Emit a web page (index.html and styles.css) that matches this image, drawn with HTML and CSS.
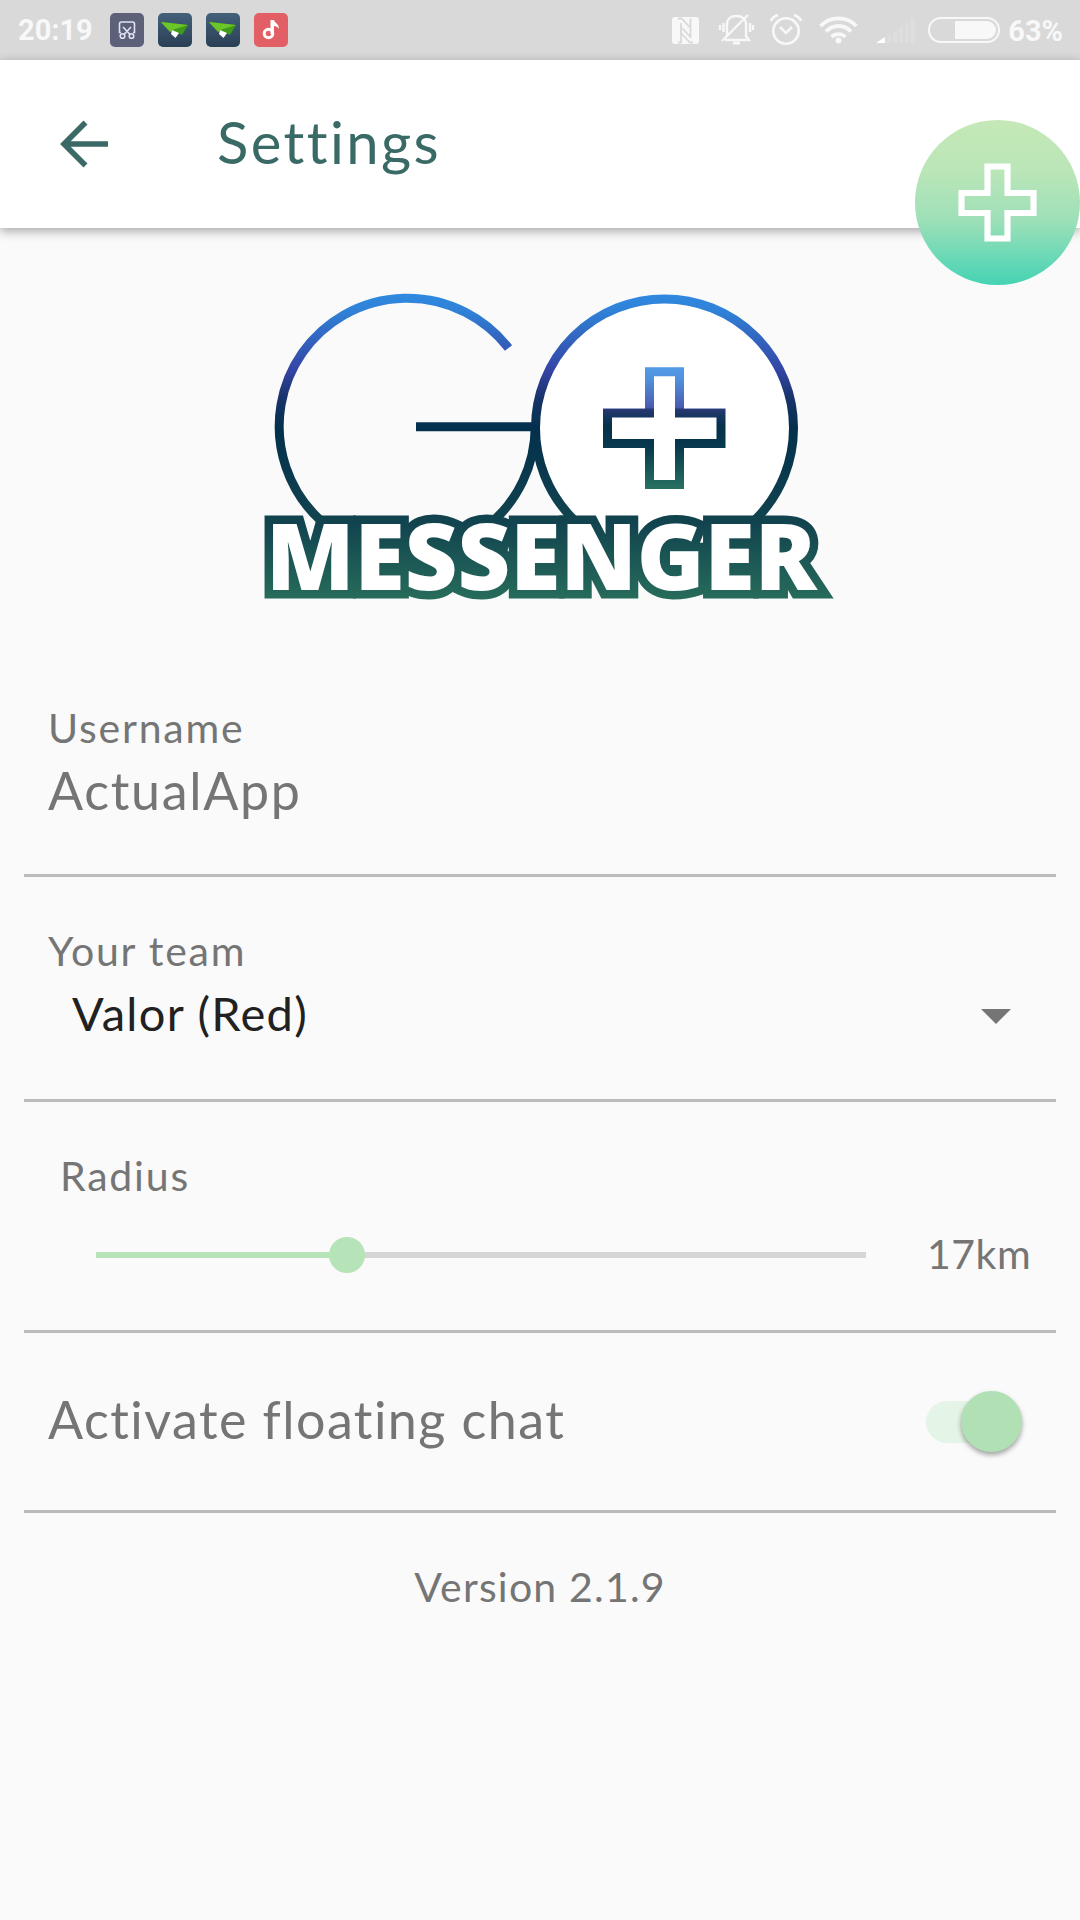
FILE: index.html
```html
<!DOCTYPE html>
<html lang="en">
<head>
  <meta charset="utf-8">
  <title>Settings</title>
  <link rel="stylesheet" href="styles.css">
</head>
<body>
  <div class="status-bar">
    <span class="time">20:19</span>
    <div class="notifications">
      <svg class="app-icon" viewBox="0 0 34 34">
        <rect width="34" height="34" rx="5" fill="#5c6078"/>
        <g fill="none" stroke="#dfe3f5" stroke-width="1.6">
          <path d="M11 19.500H9.500V11a2 2 0 0 1 2-2h11a2 2 0 0 1 2 2v8.500H23M13 14l7 7.500M21 14l-7 7.500"/>
          <circle cx="12.500" cy="23" r="2.300"/>
          <circle cx="21.500" cy="23" r="2.300"/>
        </g>
      </svg>
      <svg class="app-icon" viewBox="0 0 34 34">
        <rect width="34" height="34" rx="5" fill="url(#plane-bg)"/>
        <path d="M3 9l27 3-6 10-4-2-7-1z" fill="#3f9a18"/>
        <path d="M3 9l27 3-16 5-2 2z" fill="#6cc529"/>
        <path d="M14 17l7 3-3.500 5-4.500-4z" fill="#fff"/>
      </svg>
      <svg class="app-icon" viewBox="0 0 34 34">
        <rect width="34" height="34" rx="5" fill="url(#plane-bg)"/>
        <path d="M3 9l27 3-6 10-4-2-7-1z" fill="#3f9a18"/>
        <path d="M3 9l27 3-16 5-2 2z" fill="#6cc529"/>
        <path d="M14 17l7 3-3.500 5-4.500-4z" fill="#fff"/>
      </svg>
      <svg class="app-icon" viewBox="0 0 34 34">
        <rect width="34" height="34" rx="5" fill="#e26065"/>
        <circle cx="14.500" cy="20.500" r="4.300" fill="none" stroke="#fff" stroke-width="3"/>
        <path d="M16.500 7h3.500c.5 3 5 3.500 5 9-1.500-2.300-3-3-5-3v8h-3.500z" fill="#fff"/>
      </svg>
    </div>
    <svg class="system-icons" viewBox="670 0 332 60">
      <!-- nfc -->
      <rect x="672" y="17" width="27" height="27" rx="3" fill="#f8f8f8"/>
      <path d="M678 18.500h3.500l9 9.500M681 23v19.500h-3M690.500 18.500V38M693 42.500h-3L681 33M682 28l8 8.500" fill="none" stroke="#d9d9d9" stroke-width="1.800"/>
      <!-- muted bell -->
      <g fill="none" stroke="#f8f8f8" stroke-width="2.400">
        <path d="M727 36V24c0-5 4-8 9.500-8s9.500 3 9.500 8v12l3 4h-24M722 41l26-26M723.500 23v9M720 25v5M750 23v9M753 25v5"/>
        <path d="M733 43h7" stroke-width="3"/>
      </g>
      <!-- alarm -->
      <g fill="none" stroke="#f8f8f8" stroke-width="2.600">
        <circle cx="786" cy="31" r="12.700"/>
        <path d="M780 27l6 6 6-6M771 21c1-3 4-5 7-6M801 21c-1-3-4-5-7-6"/>
      </g>
      <!-- wifi -->
      <g fill="none" stroke="#f8f8f8" stroke-width="3.800">
        <path d="M820.500 26a25 25 0 0 1 36 0M826 31.500a17 17 0 0 1 25 0M831.500 37a10 10 0 0 1 14 0"/>
      </g>
      <circle cx="838.500" cy="40.500" r="3" fill="#f8f8f8"/>
      <!-- signal -->
      <path d="M876 43l9-6v6z" fill="#fff"/>
      <path d="M887 43v-8h4v8zM893 43V31h4v12zM899 43V27h4v16zM905 43V23h4v20zM911 43V19h4v24z" fill="#dedede"/>
      <!-- battery -->
      <rect x="929" y="18" width="70" height="24" rx="12" fill="none" stroke="#f8f8f8" stroke-width="2"/>
      <path d="M955 21h32a9 9 0 0 1 0 18h-32z" fill="#f8f8f8"/>
    </svg>
    <span class="battery-level">63%</span>
  </div>

  <div class="toolbar">
    <svg class="back" viewBox="0 0 48 48">
      <path d="M48 24H5M25.500 2.500L4 24l21.500 21.500" fill="none" stroke="#3a6a66" stroke-width="5.600"/>
    </svg>
    <h1>Settings</h1>
  </div>

  <svg class="fab" viewBox="0 0 165 165">
    <defs>
      <linearGradient id="fab-bg" x1="0" y1="0" x2="0" y2="1">
        <stop offset="0" stop-color="#c5e8b7"/>
        <stop offset=".3" stop-color="#bbe6b8"/>
        <stop offset=".6" stop-color="#9fe0b8"/>
        <stop offset="1" stop-color="#45d3b4"/>
      </linearGradient>
    </defs>
    <circle cx="82.500" cy="82.500" r="82.500" fill="url(#fab-bg)"/>
    <path d="M72.500 46.500h20v26.500h26v20h-26v25.500h-20v-25.500h-26v-20h26z" fill="none" stroke="#fff" stroke-width="6.200"/>
  </svg>

  <!-- artwork is drawn in screen units -->
  <svg class="logo" viewBox="260 290 580 312">
    <defs>
      <linearGradient id="plane-bg" x1="0" y1="0" x2="0" y2="1">
        <stop offset="0" stop-color="#44617b"/>
        <stop offset="1" stop-color="#2a3f55"/>
      </linearGradient>
      <linearGradient id="logo-fill" gradientUnits="userSpaceOnUse" x1="0" y1="294" x2="0" y2="600">
        <stop offset="0" stop-color="#2e8ae0"/>
        <stop offset=".06" stop-color="#3080d6"/>
        <stop offset=".25" stop-color="#3444a4"/>
        <stop offset=".34" stop-color="#18336a"/>
        <stop offset=".44" stop-color="#03304c"/>
        <stop offset=".75" stop-color="#12444f"/>
        <stop offset="1" stop-color="#276c5b"/>
      </linearGradient>
      <linearGradient id="plus-fill" gradientUnits="userSpaceOnUse" x1="0" y1="367" x2="0" y2="489">
        <stop offset="0" stop-color="#529be6"/>
        <stop offset=".1" stop-color="#5190dc"/>
        <stop offset=".33" stop-color="#4a5cb0"/>
        <stop offset=".35" stop-color="#24386f"/>
        <stop offset=".48" stop-color="#05314b"/>
        <stop offset=".65" stop-color="#08384d"/>
        <stop offset="1" stop-color="#287160"/>
      </linearGradient>
    </defs>
    <g fill="none" stroke="url(#logo-fill)" stroke-width="9">
      <path d="M508.500 348A128 128 0 1 0 535.200 426.700H416"/>
      <circle cx="664.500" cy="428" r="129" fill="#fff"/>
    </g>
    <path d="M649.500 371.700h30v41.300h41.500v30.500h-41.500v41h-30v-41h-42v-30.500h42z" fill="#fff" stroke="url(#plus-fill)" stroke-width="9"/>
    <text class="wordmark" x="266" y="590" stroke="url(#logo-fill)">MESSENGER</text>
  </svg>

  <div class="settings">
    <div class="row username">
      <div class="label">Username</div>
      <div class="value">ActualApp</div>
    </div>

    <div class="row team">
      <div class="label">Your team</div>
      <div class="select">
        <span>Valor (Red)</span>
        <div class="caret"></div>
      </div>
    </div>

    <div class="row radius">
      <div class="label">Radius</div>
      <div class="slider-container">
        <div class="slider">
          <div class="filled"></div>
          <div class="thumb"></div>
        </div>
        <div class="distance">17km</div>
      </div>
    </div>

    <div class="row floating">
      <div class="value">Activate floating chat</div>
      <div class="switch"></div>
    </div>

    <div class="version">Version 2.1.9</div>
  </div>
</body>
</html>
```
FILE: styles.css
```css
* {
  box-sizing: border-box;
}

body {
  position: relative;
  margin: 0;
  width: 1080px;
  min-height: 1920px;
  background: #fafafa;
  color: #757575;
  font-family: Lato, sans-serif;
}

svg {
  display: block;
}

.status-bar {
  display: flex;
  align-items: center;
  height: 60px;
  padding: 0 17px 0 18px;
  background: #d9d9d9;
  color: #f8f8f8;
  font: bold 29px Roboto, sans-serif;
}

.notifications {
  display: flex;
  gap: 14px;
  margin-left: 17px;
}

.app-icon {
  width: 34px;
  height: 34px;
}

.system-icons {
  width: 332px;
  height: 60px;
  margin-left: auto;
  margin-right: 6px;
}

.battery-level {
  margin-top: 1px;
}

.toolbar {
  display: flex;
  align-items: center;
  height: 168px;
  padding-left: 60px;
  background: #fff;
  color: #3a6a66;
  box-shadow: 0 3px 10px rgba(0, 0, 0, 0.35);
}

.back {
  width: 48px;
  height: 48px;
}

h1 {
  margin: 0 0 5px 109px;
  font-size: 58px;
  font-weight: normal;
  letter-spacing: 2.4px;
}

/* floating chat bubble, sits over the toolbar edge */
.fab {
  position: absolute;
  top: 120px;
  right: 0;
  width: 165px;
  height: 165px;
}

.logo {
  width: 580px;
  height: 312px;
  margin: 62px 0 0 260px;
  overflow: visible;
}

.wordmark {
  font: 800 91.5px "Open Sans", sans-serif;
  fill: #fff;
  stroke-width: 17px;
  paint-order: stroke;
}

.settings {
  margin: 68px 24px 0;
}

.row {
  padding: 0 24px;
  border-bottom: 3px solid #bbb;
}

.label,
.distance,
.version {
  font-size: 41px;
  line-height: 50px;
  letter-spacing: 1.8px;
}

.value {
  font-size: 52px;
  line-height: 62px;
  letter-spacing: 1.7px;
}

.username {
  height: 207px;
  padding-top: 33px;
}

.username .value {
  margin-top: 6px;
}

.team {
  height: 225px;
  padding-top: 49px;
}

.select {
  display: flex;
  align-items: center;
  justify-content: space-between;
  margin-top: 9px;
  padding: 0 21px 0 24px;
  color: #212121;
  font-size: 47px;
  line-height: 56px;
  letter-spacing: 1.3px;
}

.caret {
  margin-top: 6px;
  border: 15px solid transparent;
  border-top-color: #757575;
  border-bottom: 0;
}

.radius {
  height: 231px;
  padding-top: 49px;
}

.radius .label {
  padding-left: 12px;
}

.slider-container {
  display: flex;
  align-items: center;
  margin-top: 28px;
  padding-left: 48px;
}

.slider {
  display: flex;
  align-items: center;
  width: 770px;
  height: 6px;
  margin-top: 2px;
  background: #d6d6d6;
}

.filled {
  width: 233px;
  height: 6px;
  background: #b6e4b8;
}

.thumb {
  width: 36px;
  height: 36px;
  border-radius: 50%;
  background: #b6e4b8;
}

.distance {
  margin-left: 61px;
  letter-spacing: 0.5px;
}

.floating {
  display: flex;
  align-items: center;
  justify-content: space-between;
  height: 180px;
}

.floating .value {
  padding-bottom: 6px;
  letter-spacing: 1.45px;
}

.switch {
  display: flex;
  align-items: center;
  width: 90px;
  height: 42px;
  margin-right: 16px;
  border-radius: 21px;
  background: #e4f4e6;
}

.switch::after {
  content: "";
  width: 61px;
  height: 61px;
  flex-shrink: 0;
  margin-left: 35px;
  border-radius: 50%;
  background: #b1e0b4;
  box-shadow: 0 3px 5px rgba(0, 0, 0, 0.35);
}

.version {
  margin-top: 49px;
  text-align: center;
  letter-spacing: 1.2px;
}
```
